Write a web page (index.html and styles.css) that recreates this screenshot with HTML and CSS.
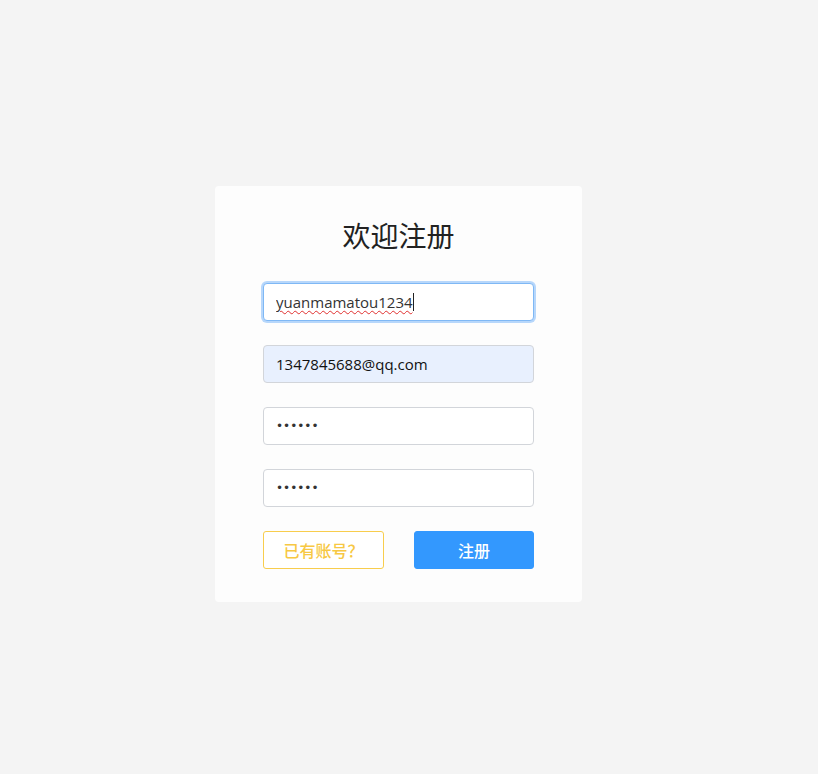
FILE: index.html
```html
<!DOCTYPE html>
<html lang="zh-CN">
<head>
<meta charset="utf-8">
<title>欢迎注册</title>
<link rel="stylesheet" href="styles.css">
</head>
<body>
<main class="page">
  <form class="card">
    <h1 class="title">欢迎注册</h1>
    <div class="field-wrap">
      <input class="field field-focus" type="text" value="yuanmamatou1234" spellcheck="false">
      <span class="spell" aria-hidden="true">yuanmamatou1234</span>
    </div>
    <input class="field field-autofill" type="text" value="1347845688@qq.com">
    <input class="field field-pass" type="password" value="123456">
    <input class="field field-pass" type="password" value="123456">
    <div class="actions">
      <button class="btn btn-ghost" type="button">已有账号？</button>
      <button class="btn btn-primary" type="button">注册</button>
    </div>
  </form>
</main>
</body>
</html>
```

FILE: styles.css
```css
* { box-sizing: border-box; }
html, body { margin: 0; padding: 0; }
body {
  background: #f4f4f4;
  font-family: "Open Sans", "Noto Sans CJK SC", sans-serif;
  width: 818px;
  height: 774px;
}
.page {
  display: flex;
  justify-content: flex-start;
  padding: 186px 0 0 215px;
}
.card {
  width: 367px;
  height: 416px;
  background: #fdfdfd;
  border-radius: 4px;
  padding: 28px 48px 0 48px;
  display: flex;
  flex-direction: column;
}
.title {
  margin: 0 0 27px 0;
  font-family: "Noto Sans CJK SC", sans-serif;
  font-weight: 400;
  font-size: 28px;
  line-height: 42px;
  color: #222;
  text-align: center;
}
.field-wrap {
  position: relative;
  width: 271px;
}
.field {
  display: block;
  width: 271px;
  height: 38px;
  margin: 0 0 24px 0;
  padding: 0 12px;
  border: 1px solid #d2d5da;
  border-radius: 4px;
  background: #fff;
  font-family: "Open Sans", "Noto Sans CJK SC", sans-serif;
  font-size: 15px;
  color: #222;
  outline: none;
}
.field-focus {
  border-color: #7fb8f5;
  box-shadow: 0 0 0 2px #b7d7fb;
  color: #333;
}
.spell {
  position: absolute;
  left: 13px;
  top: 10px;
  font-family: "Open Sans", "Noto Sans CJK SC", sans-serif;
  font-size: 15px;
  line-height: 18px;
  color: transparent;
  text-decoration: underline wavy #e0302f;
  text-decoration-thickness: 1px;
  text-underline-offset: 2px;
  border-right: 1px solid #222;
  padding-right: 0;
  pointer-events: none;
}
.field-autofill {
  background: #e8f0fe;
  color: #111;
}
.field-pass {
  font-family: "DejaVu Sans", sans-serif;
  font-size: 12px;
  letter-spacing: 0px;
  color: #333;
}
.actions {
  display: flex;
  justify-content: space-between;
}
.btn {
  height: 38px;
  border-radius: 3px;
  font-family: "Noto Sans CJK SC", sans-serif;
  font-size: 16px;
  font-weight: 500;
  cursor: pointer;
  padding: 0;
}
.btn-ghost {
  width: 121px;
  background: #fff;
  border: 1px solid #f8cd4d;
  color: #f7c843;
}
.btn-primary {
  width: 120px;
  background: #3398fe;
  border: 1px solid #3398fe;
  color: #fff;
}
```
